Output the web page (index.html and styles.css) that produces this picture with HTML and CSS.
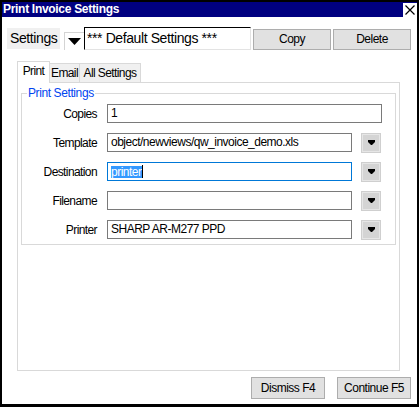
FILE: index.html
```html
<!DOCTYPE html>
<html>
<head>
<meta charset="utf-8">
<link rel="stylesheet" href="styles.css">
</head>
<body>
<div class="dialog">
  <div class="titlebar">
    <span class="title">Print Invoice Settings</span>
    <svg class="close" width="14" height="14" viewBox="0 0 14 14"><rect x="0" y="0" width="14" height="14" fill="#fff"/><path d="M2.5 2.5 L11.5 11.5 M11.5 2.5 L2.5 11.5" stroke="#000" stroke-width="1.2" fill="none"/></svg>
  </div>

  <div class="toolbar">
    <div class="set-label">Settings</div>
    <div class="combo-btn"><svg width="13" height="7" viewBox="0 0 13 7"><polygon points="0,0 13,0 6.5,7" fill="#000"/></svg></div>
    <div class="entry">*** Default Settings ***</div>
    <div class="btn tb-btn">Copy</div>
    <div class="btn tb-btn">Delete</div>
  </div>

  <div class="tabs">
    <div class="tab active tab-print">Print</div>
    <div class="tab tab-email">Email</div>
    <div class="tab tab-all">All Settings</div>
  </div>

  <div class="panel">
    <fieldset class="group">
      <legend class="legend">Print Settings</legend>
      <div class="rows">
        <div class="row">
          <div class="label">Copies</div>
          <div class="field wide">1</div>
        </div>
        <div class="row">
          <div class="label">Template</div>
          <div class="field">object/newviews/qw_invoice_demo.xls</div>
          <div class="drop"><svg width="7" height="5" viewBox="0 0 7 5"><polygon points="0,0 7,0 7,2 4,5 3,5 0,2" fill="#000"/></svg></div>
        </div>
        <div class="row">
          <div class="label">Destination</div>
          <div class="field focus"><span class="sel">printer</span><span class="caret"></span></div>
          <div class="drop"><svg width="7" height="5" viewBox="0 0 7 5"><polygon points="0,0 7,0 7,2 4,5 3,5 0,2" fill="#000"/></svg></div>
        </div>
        <div class="row">
          <div class="label">Filename</div>
          <div class="field"></div>
          <div class="drop"><svg width="7" height="5" viewBox="0 0 7 5"><polygon points="0,0 7,0 7,2 4,5 3,5 0,2" fill="#000"/></svg></div>
        </div>
        <div class="row">
          <div class="label">Printer</div>
          <div class="field">SHARP AR-M277 PPD</div>
          <div class="drop"><svg width="7" height="5" viewBox="0 0 7 5"><polygon points="0,0 7,0 7,2 4,5 3,5 0,2" fill="#000"/></svg></div>
        </div>
      </div>
    </fieldset>
  </div>

  <div class="footer">
    <div class="btn foot-btn">Dismiss F4</div>
    <div class="btn foot-btn">Continue F5</div>
  </div>
</div>
</body>
</html>
```

FILE: styles.css
```css
* { box-sizing: border-box; }

body {
  margin: 0;
  font-family: "Liberation Sans", Arial, sans-serif;
  color: #000;
}

.dialog {
  width: 419px;
  height: 407px;
  border: 2px solid #000;
  border-bottom-width: 3px;
  background: #fff;
  display: flex;
  flex-direction: column;
}

.titlebar {
  height: 15px;
  background: #000080;
  display: flex;
  justify-content: space-between;
  align-items: flex-start;
  flex: none;
}

.title {
  color: #fff;
  font-weight: bold;
  font-size: 12px;
  letter-spacing: -0.3px;
  line-height: 15px;
  padding-left: 1px;
}

.close {
  display: block;
  margin-top: 1px;
}

.toolbar {
  display: flex;
  align-items: flex-start;
  margin-top: 10px;
  padding-left: 5px;
  height: 23px;
  flex: none;
}

.set-label {
  margin-top: 1px;
  width: 53px;
  height: 21px;
  background: #f0f0f0;
  font-size: 14px;
  letter-spacing: -0.4px;
  line-height: 21px;
  padding-left: 3px;
}

.combo-btn {
  margin-left: 4px;
  margin-top: 5px;
  width: 20px;
  height: 18px;
  background: #fff;
  border-top: 1px solid #d4d4d4;
  border-left: 1px solid #d4d4d4;
  display: flex;
  align-items: center;
  justify-content: center;
}

.combo-btn svg { display: block; }

.entry {
  width: 167px;
  height: 23px;
  border-top: 1px solid #000;
  border-left: 1px solid #000;
  border-right: 1px solid #e3e3e3;
  border-bottom: 1px solid #e3e3e3;
  font-size: 14px;
  letter-spacing: -0.4px;
  line-height: 21px;
  padding-left: 2px;
  white-space: nowrap;
}

.btn {
  background: #e1e1e1;
  border: 1px solid #adadad;
  font-size: 12px;
  letter-spacing: -0.5px;
  text-align: center;
  white-space: nowrap;
}

.tb-btn {
  margin-top: 2px;
  margin-left: 2px;
  width: 78px;
  height: 21px;
  line-height: 19px;
}

.tabs {
  display: flex;
  align-items: flex-end;
  margin-top: 11px;
  margin-left: 15px;
  height: 21px;
  flex: none;
}

.tab {
  height: 19px;
  border: 1px solid #d9d9d9;
  border-bottom: none;
  background: #f0f0f0;
  font-size: 12px;
  letter-spacing: -0.6px;
  line-height: 19px;
  text-align: center;
  white-space: nowrap;
}

.tab + .tab { border-left: none; }

.tab.active {
  height: 22px;
  margin-bottom: -1px;
  background: #fff;
  line-height: 19px;
  position: relative;
  z-index: 1;
}

.tab-print { width: 33px; }
.tab-email { width: 30px; }
.tab-all { width: 61px; }

.panel {
  width: 383px;
  height: 289px;
  margin-left: 15px;
  border: 1px solid #d9d9d9;
  background: #fff;
  flex: none;
}

.group {
  margin: 4px 3px 0 3px;
  border: 1px solid #d9d9d9;
  padding: 4px 0 5px 0;
  min-width: 0;
}

.legend {
  color: #0044f0;
  font-size: 12px;
  letter-spacing: -0.4px;
  line-height: 13px;
  padding: 0 1px;
  margin-left: 5px;
}

.rows {
  display: flex;
  flex-direction: column;
  gap: 10px;
}

.row {
  display: flex;
  align-items: center;
  height: 19px;
}

.label {
  width: 75px;
  margin-right: 10px;
  text-align: right;
  font-size: 12px;
  letter-spacing: -0.6px;
  white-space: nowrap;
}

.field {
  width: 245px;
  height: 19px;
  border: 1px solid #7a7a7a;
  padding-left: 3px;
  font-size: 12px;
  letter-spacing: -0.5px;
  line-height: 17px;
  white-space: nowrap;
  overflow: hidden;
  display: flex;
  align-items: center;
}

.field.wide { width: 275px; }

.field.focus { border-color: #0078d7; }

.sel {
  background: #3399ff;
  color: #fff;
  line-height: 12px;
  height: 12px;
  display: inline-block;
}

.caret {
  display: inline-block;
  width: 1px;
  height: 13px;
  background: #000;
}

.drop {
  width: 20px;
  height: 20px;
  margin-left: 9px;
  background: #d4d4d4;
  border: 1px solid #cfcfcf;
  box-shadow: inset 0 0 0 1px #e6e6e6;
  display: flex;
  align-items: center;
  justify-content: center;
}

.drop svg { display: block; }

.footer {
  display: flex;
  justify-content: flex-end;
  gap: 12px;
  margin-top: 6px;
  padding-right: 6px;
  flex: none;
}

.foot-btn {
  width: 74px;
  height: 22px;
  line-height: 20px;
}
```
